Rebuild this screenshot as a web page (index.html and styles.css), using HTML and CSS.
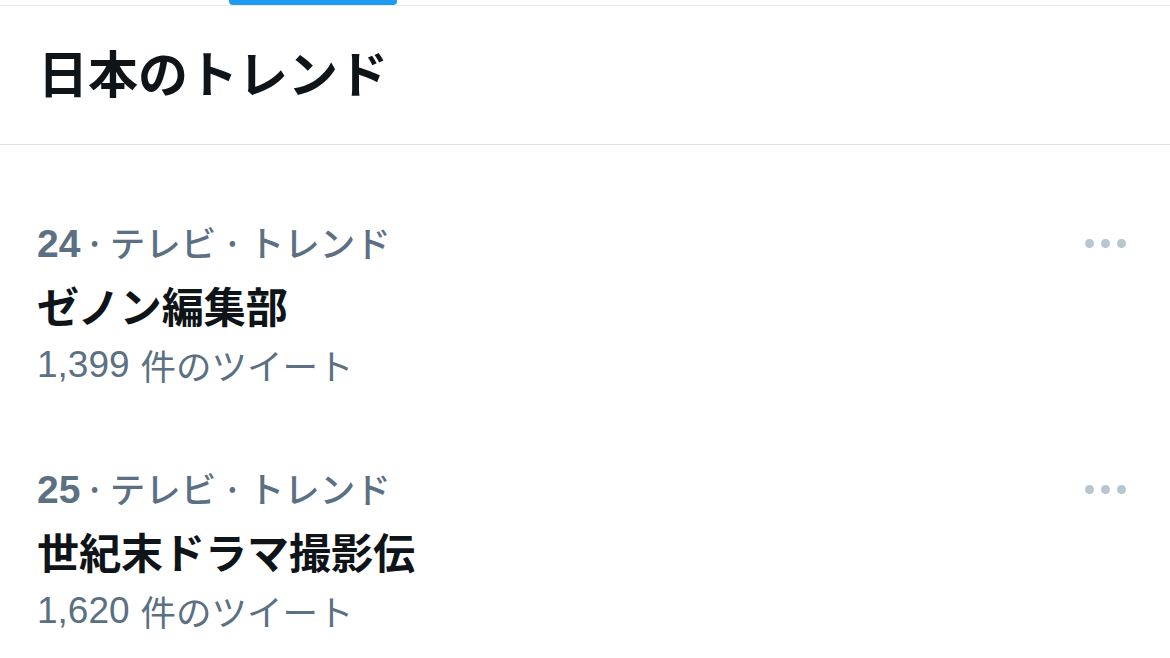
FILE: index.html
```html
<!DOCTYPE html>
<html lang="ja">
<head>
<meta charset="utf-8">
<link rel="stylesheet" href="styles.css">
</head>
<body>
<div class="tabbar">
  <div class="tab"></div>
  <div class="tab active"><span class="indicator"></span></div>
</div>
<header class="header">
  <h1 class="title">日本のトレンド</h1>
</header>
<main class="list">
  <section class="trend">
    <div class="trend-body">
      <div class="meta"><span class="rank">24</span><span class="sep">·</span>テレビ<span class="sep wide">·</span>トレンド</div>
      <div class="name">ゼノン編集部</div>
      <div class="count"><span class="num">1,399</span>件のツイート</div>
    </div>
    <div class="more"><span></span><span></span><span></span></div>
  </section>
  <section class="trend">
    <div class="trend-body">
      <div class="meta"><span class="rank">25</span><span class="sep">·</span>テレビ<span class="sep wide">·</span>トレンド</div>
      <div class="name">世紀末ドラマ撮影伝</div>
      <div class="count"><span class="num">1,620</span>件のツイート</div>
    </div>
    <div class="more"><span></span><span></span><span></span></div>
  </section>
</main>
</body>
</html>
```
FILE: styles.css
```css
html, body {
  margin: 0;
  padding: 0;
  background: #ffffff;
}
body {
  width: 1170px;
  height: 658px;
  overflow: hidden;
  font-family: "Noto Sans CJK JP", "Noto Sans", "Liberation Sans", sans-serif;
  color: #0f1419;
}
.tabbar {
  display: flex;
  height: 5px;
  border-bottom: 1.5px solid #e6ecf0;
}
.tab {
  width: 229px;
}
.tab.active {
  width: 168px;
  display: flex;
}
.indicator {
  flex: 1;
  height: 5px;
  background: #1d9bf0;
  border-radius: 0 0 4px 4px;
}
.header {
  height: 138px;
  display: flex;
  align-items: center;
  border-bottom: 1.5px solid #dde3e8;
  padding-left: 38px;
}
.title {
  margin: 0 0 8px 0;
  font-size: 50px;
  font-weight: 700;
  line-height: 1;
}
.list {
  padding-top: 74px;
  display: flex;
  flex-direction: column;
  gap: 62px;
}
.trend {
  display: flex;
  justify-content: space-between;
  padding: 0 44px 0 37px;
}
.trend-body {
  display: flex;
  flex-direction: column;
}
.meta {
  font-size: 35.5px;
  font-weight: 500;
  color: #5b7083;
  line-height: 46px;
  height: 46px;
  display: flex;
  align-items: baseline;
}
.rank {
  font-family: "Liberation Sans", "Noto Sans CJK JP", sans-serif;
  font-weight: 700;
  font-size: 39px;
}
.sep {
  margin: 0 5px 0 4px;
}
.sep.wide {
  margin: 0 6px 0 6px;
}
.name {
  margin-top: 15px;
  font-size: 42px;
  font-weight: 700;
  color: #0f1419;
  line-height: 50px;
}
.count {
  margin-top: 12px;
  font-size: 35.5px;
  font-weight: 400;
  color: #5b7083;
  line-height: 46px;
  height: 61px;
  display: flex;
  align-items: flex-start;
}
.num {
  font-family: "Liberation Sans", "Noto Sans CJK JP", sans-serif;
  font-size: 37px;
  margin-right: 11px;
}
.more {
  display: flex;
  gap: 7px;
  padding-top: 20px;
}
.more span {
  width: 9px;
  height: 9px;
  border-radius: 50%;
  background: #b8c6d0;
}
```
